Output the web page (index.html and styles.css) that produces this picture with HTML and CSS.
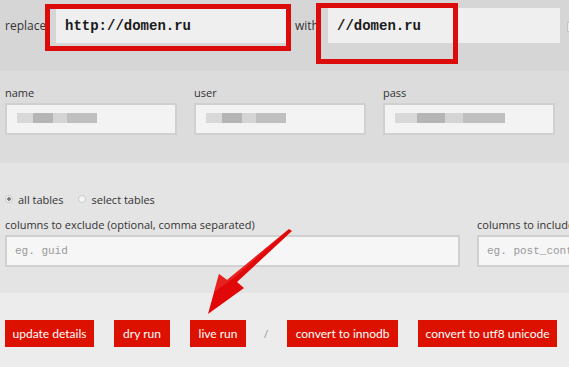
FILE: index.html
```html
<!DOCTYPE html>
<html lang="en">
<head>
    <meta charset="UTF-8">
    <title>Search Replace DB</title>
    <link rel="stylesheet" href="styles.css">
</head>
<body>
    <div class="page">
        <div class="band replace-band">
            <label class="inline-label">replace</label>
            <input class="field big" value="http://domen.ru">
            <label class="inline-label with">with</label>
            <input class="field big" value="//domen.ru">
            <span class="regex-box"></span>
        </div>

        <div class="band db-band">
            <div class="col">
                <label>name</label>
                <div class="field blurred"><span class="blur b1"></span></div>
            </div>
            <div class="col">
                <label>user</label>
                <div class="field blurred"><span class="blur b2"></span></div>
            </div>
            <div class="col">
                <label>pass</label>
                <div class="field blurred"><span class="blur b3"></span></div>
            </div>
        </div>

        <div class="band tables-band">
            <div class="radios">
                <span class="radio checked"></span> all tables
                <span class="radio"></span> select tables
            </div>
            <div class="columns">
                <div class="col wide">
                    <label>columns to exclude (optional, comma separated)</label>
                    <input class="field mono" placeholder="eg. guid">
                </div>
                <div class="col">
                    <label>columns to include</label>
                    <input class="field mono" placeholder="eg. post_content">
                </div>
            </div>
        </div>

        <div class="band actions-band">
            <button class="btn-update">update details</button>
            <button class="btn-run gap">dry run</button>
            <button class="btn-run gap">live run</button>
            <span class="slash">/</span>
            <button class="btn-innodb">convert to innodb</button>
            <button class="btn-utf8 gap">convert to utf8 unicode</button>
        </div>

        <span class="mark mark-from"></span>
        <span class="mark mark-to"></span>
        <svg class="arrow" width="110" height="100" viewBox="0 0 110 100">
            <path d="M102 9 L47 60 L54 66 L18 92 L29 52 L37 58 L99 7 Z" fill="#e00808"/>
            <path d="M99 7 L37 58 L29 52 L24 70 L44 56 Z" fill="#f23a3a" opacity="0.5"/>
        </svg>
    </div>
</body>
</html>
```

FILE: styles.css
```css
* {
    margin: 0;
    padding: 0;
    box-sizing: border-box;
}

body {
    font-family: 'Open Sans', 'Liberation Sans', sans-serif;
    font-size: 11px;
    color: #333;
    background-color: #ececec;
}

.page {
    position: relative;
    width: 569px;
    height: 367px;
    overflow: hidden;
}

.band {
    padding: 0 5px;
}

.field {
    display: block;
    height: 32px;
    background-color: #f3f3f3;
    border: 2px solid #d0d0d0;
    font-family: 'Liberation Mono', monospace;
    color: #222;
    outline: none;
}

label {
    display: block;
    height: 14px;
    line-height: 14px;
    font-size: 11px;
    margin-bottom: 3px;
}

/* Replace row */
.replace-band {
    height: 71px;
    background-color: #d6d6d6;
    display: flex;
    align-items: flex-start;
    padding-top: 8px;
}

.replace-band > * {
    flex-shrink: 0;
}

.inline-label {
    display: inline-block;
    height: 35px;
    line-height: 35px;
    font-size: 12px;
    margin: 0;
    width: 51px;
}

.inline-label.with {
    width: 33px;
    margin-left: 7px;
}

.field.big {
    width: 232px;
    height: 35px;
    border: none;
    background-color: #efefef;
    font-size: 14px;
    font-weight: bold;
    padding-left: 9px;
    color: #1a1a1a;
}

.regex-box {
    display: block;
    width: 10px;
    height: 10px;
    margin: 14px 0 0 7px;
    border: 1px solid #c4c4c4;
    background-color: #eee;
}

/* DB details */
.db-band {
    height: 92px;
    background-color: #dcdcdc;
    display: flex;
    gap: 17px;
    padding-top: 15px;
}

.db-band .col {
    width: 172px;
}

.blurred {
    padding: 8px 0 0 10px;
}

.blur {
    display: block;
    height: 10px;
    background: linear-gradient(90deg, #d4d4d4 0 20%, #aaa 20% 45%, #cfcfcf 45% 62%, #b6b6b6 62% 100%);
    opacity: 0.85;
}

.b1 { width: 80px; }
.b2 { width: 80px; }
.b3 { width: 110px; }

/* Tables */
.tables-band {
    height: 130px;
    background-color: #e4e4e4;
    padding-top: 28px;
}

.radios {
    display: flex;
    align-items: center;
    height: 16px;
    font-size: 11px;
    margin-bottom: 11px;
}

.radio {
    width: 8px;
    height: 8px;
    border-radius: 50%;
    border: 1px solid #c9c9c9;
    background-color: #f5f5f5;
    margin-right: 5px;
}

.radios .radio:last-child {
    margin-left: 15px;
}

.radio.checked {
    background: radial-gradient(circle, #777 0 1.5px, #f3f3f3 2px);
}

.columns {
    display: flex;
    gap: 17px;
}

.columns .wide {
    width: 455px;
    flex-shrink: 0;
}

.columns .col {
    white-space: nowrap;
}

.columns .col:last-child {
    width: 160px;
    flex-shrink: 0;
}

.field.mono {
    width: 100%;
    background-color: #f6f6f6;
    font-size: 11px;
    padding-left: 8px;
}

.field.mono::placeholder {
    color: #9a9a9a;
}

/* Buttons */
.actions-band {
    height: 74px;
    display: flex;
    align-items: center;
    padding-top: 7px;
}

button {
    flex-shrink: 0;
    white-space: nowrap;
    height: 27px;
    padding: 0;
    background-color: #dd1100;
    color: #fff;
    border: none;
    font-family: Lato, 'Open Sans', sans-serif;
    font-size: 12px;
    text-align: center;
}

.btn-update { width: 89px; }
.btn-run { width: 56px; }
.btn-innodb { width: 111px; }
.btn-utf8 { width: 139px; }

button.gap {
    margin-left: 20px;
}

.slash {
    color: #999;
    margin: 0 19px 0 18px;
}

/* Annotations drawn over the screenshot */
.mark {
    position: absolute;
    border: 5px solid #dd0c0c;
}

.mark-from {
    left: 45px;
    top: 4px;
    width: 246px;
    height: 47px;
}

.mark-to {
    left: 316px;
    top: 3px;
    width: 142px;
    height: 61px;
}

.arrow {
    position: absolute;
    left: 190px;
    top: 222px;
}
```
